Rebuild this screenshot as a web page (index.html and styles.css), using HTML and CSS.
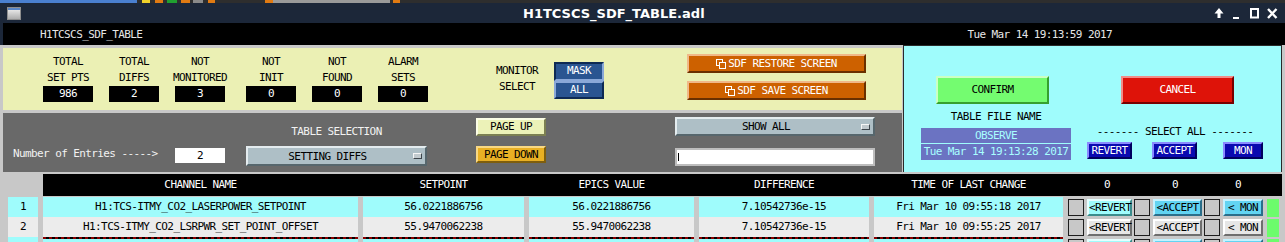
FILE: index.html
```html
<!doctype html>
<html lang="en">
    <head>
        <meta charset="UTF-8" />
        <meta name="viewport" content="width=device-width, initial-scale=1.0" />
        <title>H1TCSCS_SDF_TABLE.adl</title>
        <link rel="stylesheet" href="styles.css">
    </head>
    <body>
        <div class="strip">
            <i class="sk blue"></i><i class="sk yel"></i><i class="sk org o1"></i><i class="sk grn"></i><i class="sk org o2"></i><i class="sk gry"></i><i class="sk org o3"></i><i class="sk org o4"></i><i class="sk lgry"></i><i class="sk org o5"></i>
        </div>
        <div class="titlebar">
            <svg class="wicon" width="14" height="13" viewBox="0 0 14 13">
                <defs>
                    <linearGradient id="wg" x1="0" y1="0" x2="0" y2="1">
                        <stop offset="0" stop-color="#f6f6f6" />
                        <stop offset="1" stop-color="#a9a9a9" />
                    </linearGradient>
                </defs>
                <rect x="0.5" y="0.5" width="13" height="12" fill="url(#wg)" stroke="#8e8e8e" />
                <rect x="1" y="1" width="12" height="2" fill="#5a86c6" />
            </svg>
            <span class="wtitle">H1TCSCS_SDF_TABLE.adl</span>
            <svg class="wbtns" width="68" height="14" viewBox="0 0 68 14">
                <path d="M6 2 L1.5 7.5 H4.5 V12 H7.5 V7.5 H10.5 Z" fill="#fff" />
                <rect x="20" y="11" width="6" height="2" fill="#fff" />
                <rect x="38" y="3" width="7" height="8.5" fill="none" stroke="#fff" stroke-width="2" />
                <path d="M55 3 L63.5 12 M63.5 3 L55 12" stroke="#fff" stroke-width="2.4" />
            </svg>
        </div>
        <div class="win">
            <div class="namebar">
                <span>H1TCSCS_SDF_TABLE</span>
                <span>Tue Mar 14 19:13:59 2017</span>
            </div>
            <div class="top">
                <div class="lcol">
                    <div class="ypanel">
                        <div class="stat"><span>TOTAL</span><span>SET PTS</span><b>986</b></div>
                        <div class="stat"><span>TOTAL</span><span>DIFFS</span><b>2</b></div>
                        <div class="stat"><span>NOT</span><span>MONITORED</span><b>3</b></div>
                        <div class="stat wide"><span>NOT</span><span>INIT</span><b>0</b></div>
                        <div class="stat"><span>NOT</span><span>FOUND</span><b>0</b></div>
                        <div class="stat"><span>ALARM</span><span>SETS</span><b>0</b></div>
                        <div class="monlbl"><span>MONITOR</span><span>SELECT</span></div>
                        <div class="choice">
                            <span class="opt on">MASK</span>
                            <span class="opt">ALL</span>
                        </div>
                        <div class="sdfbtns">
                            <div class="obtn">
                                <svg width="11" height="10" viewBox="0 0 11 10"><rect x="0.5" y="0.5" width="6" height="6" fill="none" stroke="#fff" /><rect x="3.5" y="3.5" width="6" height="6" fill="#cd6100" stroke="#fff" /></svg>SDF RESTORE SCREEN
                            </div>
                            <div class="obtn">
                                <svg width="11" height="10" viewBox="0 0 11 10"><rect x="0.5" y="0.5" width="6" height="6" fill="none" stroke="#fff" /><rect x="3.5" y="3.5" width="6" height="6" fill="#cd6100" stroke="#fff" /></svg>SDF SAVE SCREEN
                            </div>
                        </div>
                    </div>
                    <div class="gpanel">
                        <span></span><span></span>
                        <div class="tsel">TABLE SELECTION</div>
                        <div class="pbtn pup">PAGE UP</div>
                        <div class="menu wide"><span>SHOW ALL</span><i></i></div>
                        <div class="nent">Number of Entries -----&gt;</div>
                        <div class="nbox">2</div>
                        <div class="menu"><span>SETTING DIFFS</span><i></i></div>
                        <div class="pbtn pdn">PAGE DOWN</div>
                        <div class="tfield"><i></i></div>
                    </div>
                </div>
                <div class="cpanel">
                    <div class="ccol cleft">
                        <div class="bigbtn confirm">CONFIRM</div>
                        <div class="clbl">TABLE FILE NAME</div>
                        <div class="fbox">OBSERVE</div>
                        <div class="fbox fdate">Tue Mar 14 19:13:28 2017</div>
                    </div>
                    <div class="ccol cright">
                        <div class="bigbtn cancel">CANCEL</div>
                        <div class="clbl csel">------- SELECT ALL -------</div>
                        <div class="allbtns">
                            <div class="bbtn">REVERT</div>
                            <div class="bbtn b2">ACCEPT</div>
                            <div class="bbtn b3">MON</div>
                        </div>
                    </div>
                </div>
            </div>
            <div class="tbl">
                <div class="thead">
                    <span>CHANNEL NAME</span>
                    <span>SETPOINT</span>
                    <span>EPICS VALUE</span>
                    <span>DIFFERENCE</span>
                    <span>TIME OF LAST CHANGE</span>
                    <div class="zeros"><span>0</span><span>0</span><span>0</span></div>
                </div>
                <div class="row hi">
                    <span>1</span>
                    <span>H1:TCS-ITMY_CO2_LASERPOWER_SETPOINT</span>
                    <span>56.0221886756</span>
                    <span>56.0221886756</span>
                    <span>7.10542736e-15</span>
                    <span>Fri Mar 10 09:55:18 2017</span>
                    <div class="ctl">
                        <i class="sq"></i><span class="rb rev">&lt;REVERT</span>
                        <i class="sq"></i><span class="rb acc">&lt;ACCEPT</span>
                        <i class="sq"></i><span class="rb mon">&lt; MON</span>
                        <i class="ok"></i>
                    </div>
                </div>
                <div class="row">
                    <span>2</span>
                    <span>H1:TCS-ITMY_CO2_LSRPWR_SET_POINT_OFFSET</span>
                    <span>55.9470062238</span>
                    <span>55.9470062238</span>
                    <span>7.10542736e-15</span>
                    <span>Fri Mar 10 09:55:25 2017</span>
                    <div class="ctl">
                        <i class="sq"></i><span class="rb rev">&lt;REVERT</span>
                        <i class="sq"></i><span class="rb acc">&lt;ACCEPT</span>
                        <i class="sq"></i><span class="rb mon">&lt; MON</span>
                        <i class="ok"></i>
                    </div>
                </div>
                <div class="row hi blank">
                    <span>3</span>
                    <span class="dash"></span>
                    <span class="dash"></span>
                    <span class="dash"></span>
                    <span class="dash"></span>
                    <span class="dash"></span>
                    <div class="ctl">
                        <i class="sq"></i><span class="rb rev"></span>
                        <i class="sq"></i><span class="rb acc"></span>
                        <i class="sq"></i><span class="rb mon"></span>
                        <i class="ok"></i>
                    </div>
                </div>
            </div>
        </div>
    </body>
</html>
```

FILE: styles.css
```css
* {
    box-sizing: border-box;
}
body {
    margin: 0;
    width: 1285px;
    height: 242px;
    overflow: hidden;
    background: #1c2739;
    color: #000;
    font-family: "DejaVu Sans Mono", monospace;
    font-size: 11px;
    letter-spacing: -0.6px;
}

/* strip of the window behind */
.strip {
    display: flex;
    height: 3px;
    background: #2e2e2e;
}
.sk {
    display: block;
    height: 3px;
}
.blue { width: 137px; background: #4a80d0; }
.yel { width: 8px; margin-left: 5px; background: #f0d22a; }
.org { background: #e07a12; }
.o1 { width: 8px; margin-left: 5px; }
.grn { width: 10px; margin-left: 4px; background: #20a030; }
.o2 { width: 9px; margin-left: 4px; }
.gry { width: 10px; margin-left: 3px; background: #8a8a8a; }
.o3 { width: 7px; margin-left: 5px; }
.o4 { width: 8px; margin-left: 50px; }
.lgry { width: 117px; background: #9a9a9a; }
.o5 { width: 7px; margin-left: 3px; }

/* title bar */
.titlebar {
    display: flex;
    align-items: center;
    height: 20px;
    color: #fff;
}
.wicon {
    margin-left: 7px;
}
.wtitle {
    margin-left: 502px;
    font-family: "DejaVu Sans", sans-serif;
    font-weight: bold;
    font-size: 13px;
    letter-spacing: 0;
}
.wbtns {
    margin-left: auto;
    margin-right: 4px;
}

.win {
    height: 219px;
    background: #c8c8c8;
}
.namebar {
    display: flex;
    justify-content: space-between;
    align-items: center;
    height: 22px;
    padding: 0 173px 0 37px;
    border-left: 3px solid #1c2739;
    background: #000;
    color: #e6e6e6;
}

.top {
    display: flex;
}
.lcol {
    width: 902px;
    padding: 3px 0 0 3px;
}

/* yellow summary panel */
.ypanel {
    display: flex;
    align-items: flex-start;
    height: 62px;
    padding: 6px 0 0 40px;
    background: #ebf0b4;
}
.stat {
    display: flex;
    flex-direction: column;
    align-items: center;
    width: 50px;
    line-height: 16px;
    white-space: nowrap;
}
.stat + .stat {
    margin-left: 16px;
}
.stat.wide {
    margin-left: 21px;
}
.stat b {
    width: 50px;
    height: 16px;
    background: #000;
    color: #fff;
    font-weight: normal;
    text-align: center;
}
.monlbl {
    display: flex;
    flex-direction: column;
    align-items: center;
    width: 48px;
    margin: 9px 0 0 65px;
    line-height: 16px;
}
.choice {
    display: flex;
    flex-direction: column;
    width: 50px;
    margin: 8px 0 0 13px;
}
.opt {
    height: 18px;
    line-height: 14px;
    text-align: center;
    color: #fff;
    background: #2a5591;
    border: 2px solid;
    border-color: #8aa8d8 #0e2a54 #0e2a54 #8aa8d8;
}
.opt.on {
    height: 19px;
    border-color: #0e2a54 #8aa8d8 #8aa8d8 #0e2a54;
}
.sdfbtns {
    display: flex;
    flex-direction: column;
    gap: 8px;
    margin-left: 83px;
}
.obtn {
    display: flex;
    justify-content: center;
    align-items: center;
    width: 179px;
    height: 19px;
    color: #fff;
    background: #cd6100;
    border: 2px solid;
    border-color: #f0b888 #6a3000 #6a3000 #f0b888;
}
.obtn svg {
    margin-right: 1px;
}

/* dark selection panel */
.gpanel {
    display: grid;
    grid-template-columns: 162px 71px 230px 199px 200px;
    grid-template-rows: 19px 20px;
    row-gap: 10px;
    align-items: start;
    height: 59px;
    margin-top: 3px;
    padding: 4px 0 0 10px;
    background: #696969;
    color: #f2f2f2;
}
.tsel {
    width: 181px;
    padding-top: 9px;
    line-height: 12px;
    text-align: center;
}
.nent {
    line-height: 16px;
    white-space: nowrap;
}
.nbox {
    width: 50px;
    height: 15px;
    margin-top: 2px;
    line-height: 15px;
    text-align: center;
    background: #fff;
    color: #000;
}
.menu {
    display: flex;
    align-items: center;
    width: 181px;
    height: 20px;
    color: #000;
    background: #aebfc6;
    border: 2px solid;
    border-color: #e4ecef #56666c #56666c #e4ecef;
}
.menu.wide {
    width: 200px;
    height: 19px;
}
.menu span {
    flex: 1;
    text-align: center;
}
.menu i {
    width: 9px;
    height: 6px;
    margin: 0 3px 0 6px;
    background: #c2cace;
    border: 1px solid;
    border-color: #f6f6f6 #3e464c #3e464c #f6f6f6;
}
.pbtn {
    width: 70px;
    height: 18px;
    line-height: 14px;
    text-align: center;
    color: #000;
    border: 2px solid;
}
.pup {
    margin-top: 1px;
    background: #ecf2b8;
    border-color: #fbfde6 #7c8052 #7c8052 #fbfde6;
}
.pdn {
    height: 17px;
    line-height: 13px;
    background: #e9b024;
    border-color: #f8d884 #7e5e0e #7e5e0e #f8d884;
}
.tfield {
    display: flex;
    align-items: center;
    width: 200px;
    height: 18px;
    margin-top: 2px;
    background: #fff;
    border: 2px solid #bdbdbd;
}
.tfield i {
    width: 1px;
    height: 8px;
    margin-left: 1px;
    background: #000;
}

/* cyan control panel */
.cpanel {
    display: flex;
    align-items: flex-start;
    width: 379px;
    height: 127px;
    margin-left: 1px;
    background: #9ffcfc;
    border: 1px solid #2a2a2a;
    border-bottom: 0;
}
.ccol {
    display: flex;
    flex-direction: column;
    padding-top: 30px;
}
.cleft {
    width: 150px;
    margin-left: 17px;
}
.cright {
    width: 176px;
    margin-left: 16px;
}
.bigbtn {
    width: 113px;
    height: 28px;
    line-height: 24px;
    text-align: center;
    border: 2px solid;
}
.confirm {
    margin-left: 15px;
    background: #74fc70;
    border-color: #ccffc4 #36a02e #36a02e #ccffc4;
}
.cancel {
    margin-left: 34px;
    color: #fff;
    background: #de1309;
    border-color: #f28c88 #780000 #780000 #f28c88;
}
.clbl {
    margin-top: 5px;
    line-height: 16px;
    text-align: center;
    white-space: nowrap;
}
.csel {
    margin-top: 20px;
}
.fbox {
    height: 15px;
    margin-top: 3px;
    line-height: 15px;
    text-align: center;
    color: #a8ffff;
    background: #6b73c2;
}
.fdate {
    height: 16px;
    margin-top: 1px;
    line-height: 16px;
}
.allbtns {
    display: flex;
    margin-top: 2px;
}
.bbtn {
    width: 45px;
    height: 17px;
    line-height: 13px;
    text-align: center;
    color: #fff;
    background: #0a0ab0;
    border: 2px solid;
    border-color: #8a8aff #00005e #00005e #8a8aff;
}
.bbtn.b2 {
    margin-left: 20px;
}
.bbtn.b3 {
    width: 40px;
    margin-left: 26px;
}

/* table */
.tbl {
    padding: 2px 3px 0 8px;
}
.thead {
    display: grid;
    grid-template-columns: 315px 161px 165px 170px 189px 1fr;
    column-gap: 5px;
    height: 22px;
    margin: 0 0 1px 35px;
    line-height: 22px;
    text-align: center;
    color: #fff;
    background: #000;
}
.zeros {
    display: flex;
}
.zeros span:nth-child(1) { margin-left: 36px; }
.zeros span:nth-child(2) { margin-left: 62px; }
.zeros span:nth-child(3) { margin-left: 57px; }

.row {
    display: grid;
    grid-template-columns: 30px 315px 161px 165px 170px 189px auto;
    column-gap: 5px;
    height: 20px;
    line-height: 20px;
    text-align: center;
    white-space: nowrap;
}
.row > span {
    background: #ececec;
}
.row.hi > span {
    background: #9ffcfc;
}
.row.blank > .dash {
    background: repeating-linear-gradient(90deg, #8a0000 0 3px, #000 3px 6px) top / 100% 2px no-repeat, #9ffcfc;
}
.ctl {
    display: flex;
    align-items: flex-start;
    padding-top: 2px;
}
.sq {
    display: block;
    width: 16px;
    height: 17px;
    margin-left: 2px;
    background: #c8c8c8;
    border: 1px solid #1e1e1e;
}
.sq:first-child {
    margin-left: 0;
}
.rb {
    height: 17px;
    margin-left: 3px;
    line-height: 13px;
    text-align: center;
    background: #e6e6e6;
    border: 2px solid;
    border-color: #fff #6e6e6e #6e6e6e #fff;
}
.rev { width: 45px; }
.acc { width: 49px; }
.mon { width: 40px; }
.row.hi .rev {
    background: #9ffcfc;
    border-color: #e6ffff #3a8c8c #3a8c8c #e6ffff;
}
.row.hi .acc,
.row.hi .mon {
    background: #62d4f2;
    border-color: #c4f2ff #2a6e8a #2a6e8a #c4f2ff;
}
.ok {
    display: block;
    width: 12px;
    height: 18px;
    margin-left: 4px;
    background: #6cfc6c;
}
```
